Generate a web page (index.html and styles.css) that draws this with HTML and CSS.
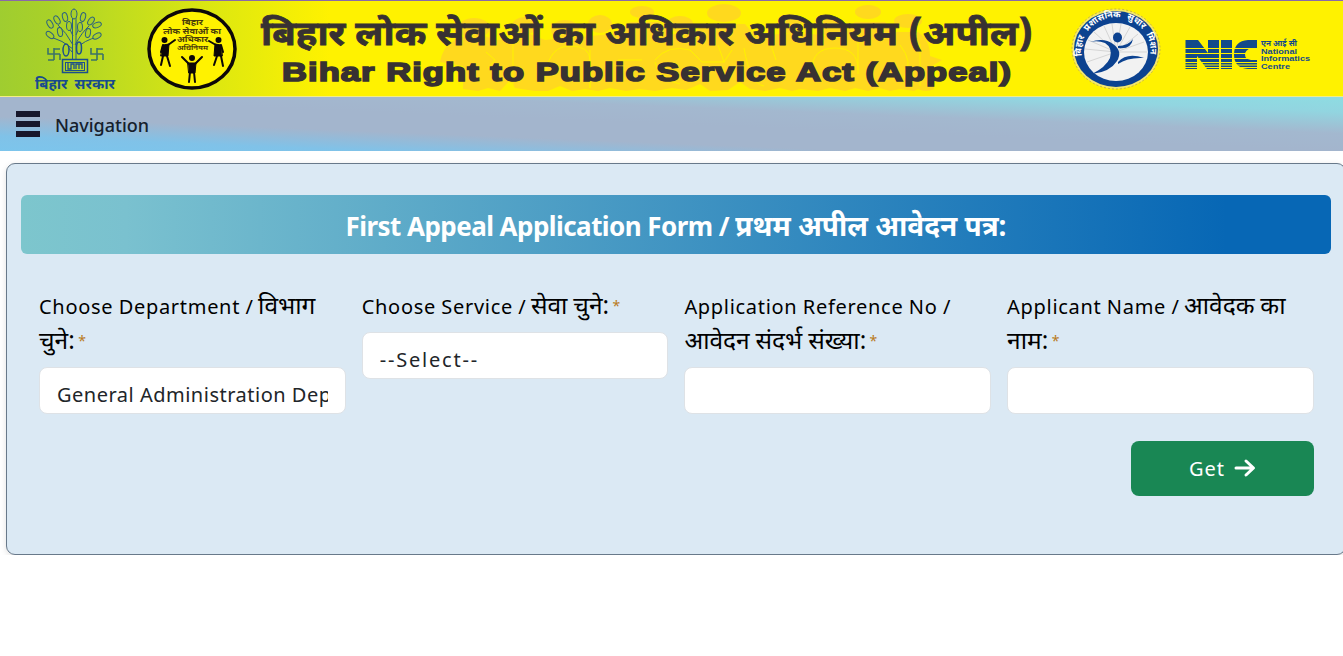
FILE: index.html
```html
<!DOCTYPE html>
<html lang="en">
<head>
    <meta charset="UTF-8">
    <meta name="viewport" content="width=device-width, initial-scale=1.0">
    <title>First Appeal</title>
    <link rel="stylesheet" href="styles.css">
</head>
<body>
    <header class="banner">
        <svg class="crowd" width="510" height="97" viewBox="440 0 510 97">
            <g fill="#ffd91e">
                <ellipse cx="474" cy="28" rx="16" ry="10"/>
                <ellipse cx="524" cy="26" rx="12" ry="9"/>
                <ellipse cx="565" cy="30" rx="14" ry="10"/>
                <ellipse cx="600" cy="24" rx="12" ry="9"/>
                <ellipse cx="642" cy="12" rx="12" ry="6"/>
                <ellipse cx="680" cy="24" rx="13" ry="8"/>
                <ellipse cx="724" cy="13" rx="17" ry="9"/>
                <ellipse cx="790" cy="24" rx="12" ry="10"/>
                <ellipse cx="830" cy="27" rx="12" ry="9"/>
                <ellipse cx="868" cy="12" rx="13" ry="7"/>
                <ellipse cx="908" cy="21" rx="14" ry="7"/>
                <path d="M455 40Q474 30 495 40H515L530 34 545 40 565 38 590 36 612 34 630 22H660L672 34H692L705 24H745L755 36 780 34H812L840 38 855 22H885L895 32H918Q930 40 930 56L942 60 932 66 934 89Q926 93 918 89L914 91 900 89 890 91 880 88 868 91 855 88 845 91 830 88 818 91 800 89 792 91 780 88 765 91 750 89 740 82 728 90 710 91 700 84 686 90 672 88 655 91 640 89 626 91 610 88 598 91 585 89 572 91 560 86 548 91 535 91 515 88 510 80 500 91 488 88 478 91 463 89 463 66 440 62Q443 46 455 40Z"/>
            </g>
            <path fill="none" stroke="#fff200" d="M486 52L495 60 488 68M513 36V86M546 72Q550 46 570 46T590 60V88M590 88V50M618 60H642M655 60Q668 44 690 50L702 62H725M655 62Q658 80 680 84M718 45L724 62 732 50M744 48Q750 84 764 86M770 42L776 60M812 70Q812 48 835 48T858 70M858 74V42M900 45Q914 62 904 78M920 44V86"/>
        </svg>

        <svg class="emblem" width="140" height="97" viewBox="0 0 140 97">
            <g fill="none" stroke="#2a6080" stroke-width="1">
                <path d="M72.500 59V16M76 59V16M73 45Q66 32 58 25M73 49Q62 40 51 37M75 45Q82 32 89 26M76 49Q84 40 98 37M73 36Q69 28 67 22M76 35Q79 28 82 22M72 52Q68 46 66 49M77 52Q81 42 79 45"/>
                <g fill="#a8d02a">
                    <ellipse cx="74" cy="14" rx="3" ry="5"/>
                    <ellipse cx="65" cy="17" rx="2.500" ry="4.500" transform="rotate(-15 65 17)"/>
                    <ellipse cx="83" cy="17" rx="2.500" ry="4.500" transform="rotate(15 83 17)"/>
                    <ellipse cx="57" cy="20" rx="2.500" ry="4.500" transform="rotate(-30 57 20)"/>
                    <ellipse cx="91" cy="21" rx="2.500" ry="4.500" transform="rotate(35 91 21)"/>
                    <ellipse cx="50" cy="24" rx="2.500" ry="4.500" transform="rotate(-30 50 24)"/>
                    <ellipse cx="97" cy="25" rx="2.500" ry="4.500" transform="rotate(70 97 25)"/>
                    <ellipse cx="50" cy="35" rx="2.500" ry="4.500" transform="rotate(-50 50 35)"/>
                    <ellipse cx="97" cy="36" rx="2.500" ry="4.500" transform="rotate(60 97 36)"/>
                    <ellipse cx="60" cy="32" rx="2.500" ry="4.500" transform="rotate(-10 60 32)"/>
                    <ellipse cx="88" cy="33" rx="2.500" ry="4.500" transform="rotate(10 88 33)"/>
                    <ellipse cx="69" cy="26" rx="2.500" ry="4.500"/>
                    <ellipse cx="80" cy="27" rx="2.500" ry="4.500"/>
                    <ellipse cx="66" cy="50" rx="3" ry="6" stroke="#1c4f8c" stroke-width="1.500"/>
                    <ellipse cx="79" cy="48" rx="2.500" ry="6" stroke="#1c4f8c" stroke-width="1.500"/>
                </g>
                <g stroke="#1c4f8c">
                    <rect x="62.500" y="59.500" width="25" height="13" stroke-width="1.500"/>
                    <rect x="65.500" y="62.500" width="19" height="8"/>
                    <path stroke-width="1.300" d="M68 63V69H71V64H74V69M76 69V64H79V69M79 64H82V69"/>
                </g>
                <path stroke="#3c7368" stroke-width="1.600" d="M48 48V54H60M54 48V60M54 49H60M48 60H54M60 54V60"/>
                <path stroke="#3c7368" stroke-width="1.600" d="M91 48V54H103M97 48V60M97 49H103M91 60H97M103 54V60"/>
            </g>
            <text class="hindi" x="35" y="89" font-size="14" word-spacing="3" textLength="80" lengthAdjust="spacingAndGlyphs" fill="#174a8f">बिहार सरकार</text>
        </svg>

        <svg class="seal" width="105" height="97" viewBox="140 0 105 97">
            <ellipse cx="192" cy="49" rx="43" ry="39" fill="#fff200" stroke="#0c0708" stroke-width="3.500"/>
            <g class="hindi" fill="#4a3d0a" font-size="8">
                <text x="182" y="25" textLength="21" lengthAdjust="spacingAndGlyphs">बिहार</text>
                <text x="163" y="33.500" textLength="58" lengthAdjust="spacingAndGlyphs">लोक सेवाओं का</text>
                <text x="177" y="42" textLength="31" lengthAdjust="spacingAndGlyphs">अधिकार</text>
                <text x="177" y="50" font-size="7" textLength="31" lengthAdjust="spacingAndGlyphs">अधिनियम</text>
            </g>
            <g fill="#0c0708" stroke="#0c0708" stroke-width="2" stroke-linecap="round">
                <circle cx="164.500" cy="40" r="2"/>
                <path d="M163 45L169 44 168 56H161Z" stroke-width="1"/>
                <path fill="none" d="M168 45L175 40M163 45L161 52M163 56L161 65M167 56L170 66"/>
                <circle cx="218.500" cy="40" r="2"/>
                <path d="M221 45L215 44 214 56H222Z" stroke-width="1"/>
                <path fill="none" d="M216 45L209 41M221 45L223 52M217 56L214 65M221 56L223 66"/>
                <circle cx="192" cy="58" r="2"/>
                <path d="M188 63H196L195 73H189Z" stroke-width="1"/>
                <path fill="none" d="M189 64L182 57M195 64L202 57M190 72L189 82M194 72L195 82"/>
            </g>
        </svg>

        <svg class="title" width="815" height="97" viewBox="245 0 815 97">
            <text class="hindi" x="261" y="45" font-size="34" textLength="772" lengthAdjust="spacingAndGlyphs">बिहार लोक सेवाओं का अधिकार अधिनियम (अपील)</text>
            <text class="english" x="282" y="80.500" font-size="26.500" textLength="730" lengthAdjust="spacingAndGlyphs">Bihar Right to Public Service Act (Appeal)</text>
        </svg>

        <svg class="mission" width="115" height="97" viewBox="1060 0 115 97">
            <ellipse cx="1116" cy="49" rx="44" ry="40" fill="#f5e76a" stroke="#b6a64c" stroke-width=".8" stroke-dasharray="2 2"/>
            <ellipse cx="1116" cy="49" rx="42" ry="38" fill="#0c4290"/>
            <ellipse cx="1116" cy="52" rx="32" ry="29" fill="#f2f2f2"/>
            <path stroke="#d5d5d5" stroke-width="1" d="M1116 52L1104 26M1116 52L1112 24M1116 52L1121 24M1116 52L1130 27M1116 52L1138 34M1116 52L1144 42M1116 52L1147 52M1116 52L1094 32M1116 52L1088 40M1116 52L1085 49M1116 52L1087 62"/>
            <path id="ring" fill="none" d="M1082 56A34.500 33 0 1 1 1150 56"/>
            <text class="hindi" font-size="9" word-spacing="3.500" fill="#fff"><textPath href="#ring">बिहार प्रशासनिक सुधार मिशन</textPath></text>
            <g fill="#0c4290">
                <ellipse cx="1117.500" cy="37.500" rx="4.500" ry="5"/>
                <path d="M1090 42Q1104 37 1113 44 1123 51 1117 61 1110 72 1092 74 1106 67 1110 58 1113 48 1105 43 1098 40 1090 42Z"/>
                <path d="M1118 46Q1128 46 1133 39 1131 50 1118 48Z"/>
                <path d="M1118 62Q1127 52 1144 58 1128 57 1118 64Z"/>
            </g>
        </svg>

        <svg class="nic" width="168" height="97" viewBox="1175 0 168 97">
            <g fill="#134a8a">
                <path d="M1185.500 40H1198L1208 53V40H1219V69H1207L1197 56V69H1185.500Z"/>
                <path d="M1221 40H1232V69H1221Z"/>
                <path d="M1257 40H1248Q1234 41 1234 54.500T1248 69H1257V60H1251Q1245 59 1245 54.500T1251 48H1257Z"/>
            </g>
            <path stroke="#fff200" stroke-width="1" d="M1185 48.500H1258M1185 53.500H1258M1185 58.500H1258M1185 62.500H1258M1185 65H1258M1185 67.500H1258"/>
            <g fill="#134a8a" font-family="Liberation Sans" font-weight="bold" font-size="8">
                <text class="hindi" x="1261" y="45.500" font-size="8.500" textLength="36" lengthAdjust="spacingAndGlyphs">एन आई सी</text>
                <text x="1261" y="54" textLength="36" lengthAdjust="spacingAndGlyphs">National</text>
                <text x="1261" y="61" textLength="49" lengthAdjust="spacingAndGlyphs">Informatics</text>
                <text x="1261" y="68.500" textLength="29" lengthAdjust="spacingAndGlyphs">Centre</text>
            </g>
        </svg>
    </header>

    <nav class="navbar">
        <div class="bars"><span></span><span></span><span></span></div>
        <span class="nav-label">Navigation</span>
    </nav>

    <main class="card">
        <h1>First Appeal Application Form / <span class="hi">प्रथम अपील आवेदन पत्र:</span></h1>
        <form class="row">
            <div class="field">
                <label>Choose Department / <span class="hi">विभाग<br>चुने:</span> <span class="star">*</span></label>
                <div class="control"><span>General Administration Department</span></div>
            </div>
            <div class="field">
                <label>Choose Service / <span class="hi">सेवा चुने:</span> <span class="star">*</span></label>
                <div class="control"><span class="placeholder">--Select--</span></div>
            </div>
            <div class="field">
                <label>Application Reference No /<br><span class="hi">आवेदन संदर्भ संख्या:</span> <span class="star">*</span></label>
                <input class="control" type="text">
            </div>
            <div class="field">
                <label>Applicant Name / <span class="hi">आवेदक का<br>नाम:</span> <span class="star">*</span></label>
                <input class="control" type="text">
            </div>
        </form>
        <div class="actions">
            <button type="button">Get
                <svg width="22" height="20" viewBox="0 0 22 20"><path d="M2 10H19M12 3L19.500 10 12 17" fill="none" stroke="#fff" stroke-width="3" stroke-linecap="round" stroke-linejoin="round"/></svg>
            </button>
        </div>
    </main>
</body>
</html>
```

FILE: styles.css
```css
* {
    box-sizing: border-box;
}

body {
    margin: 0;
    background-color: #fff;
    font-family: "Noto Sans", "Open Sans", sans-serif;
    color: #000;
    overflow: hidden;
}

.banner {
    position: relative;
    display: flex;
    height: 97px;
    border-top: 1px solid #8a6aa8;
    border-bottom: 1px solid #f3ee86;
    background: linear-gradient(to right, #9fcd30 0, #a9d128 50px, #bedb20 110px, #dfe80f 220px, #fff200 330px);
}

.banner svg {
    display: block;
    flex: none;
    margin-top: -1px;
    position: relative;
    overflow: visible;
}

.banner .crowd {
    position: absolute;
    left: 440px;
    top: 0;
}

.hindi {
    font-family: "Noto Sans Devanagari", "Noto Sans", sans-serif;
    font-weight: bold;
}

.title {
    fill: #373132;
    stroke: #373132;
    stroke-width: 0.8px;
}

.english {
    font-family: "Liberation Sans", Arial, sans-serif;
    font-weight: bold;
    letter-spacing: 0.8px;
    stroke-width: 1.6px;
}

.navbar {
    display: flex;
    align-items: center;
    gap: 15px;
    height: 54px;
    padding: 0 15px 0 16px;
    background:
        linear-gradient(to top right, #7cc5ec 0, #80c2e8 14%, rgba(163, 181, 205, 0) 32%),
        linear-gradient(to bottom left, #8edce2 0, #92d5e0 14%, #a3b8cf 34%, #a3b5cd 50%);
}

.bars {
    display: flex;
    flex-direction: column;
    gap: 4px;
    width: 24px;
}

.bars span {
    height: 6px;
    background-color: #17172b;
}

.nav-label {
    padding-top: 2px;
    font-size: 18px;
    font-weight: 500;
    color: #16202c;
}

.card {
    width: 1340px;
    height: 392px;
    margin: 12px 0 0 6px;
    padding: 31px 14px 0;
    border: 1px solid #68798a;
    border-radius: 9px;
    background-color: #dbe9f4;
    box-shadow: 0 2px 6px rgba(0, 0, 0, 0.12);
}

h1 {
    width: 1310px;
    height: 59px;
    margin: 0;
    border-radius: 6px;
    background: linear-gradient(to right, #7dc6cd 0, #7ac1cf 8%, #0767b5 92%);
    color: #fff;
    font-size: 26px;
    font-weight: bold;
    line-height: 61px;
    letter-spacing: -0.55px;
    text-align: center;
    white-space: nowrap;
}

h1 .hi {
    font-size: 28px;
}

.row {
    display: grid;
    grid-template-columns: repeat(4, 306.5px);
    column-gap: 16.2px;
    align-items: start;
    margin: 35px 0 0 18px;
}

label {
    display: block;
    height: 35px;
    margin-bottom: 8px;
    font-size: 20px;
    line-height: 35px;
    letter-spacing: 0.7px;
    word-spacing: -0.5px;
    white-space: nowrap;
}

label:has(br) {
    height: 70px;
}

.hi {
    letter-spacing: 0;
}

label .hi {
    margin-left: -1px;
    font-size: 24.500px;
    line-height: 30px;
}

label br + .hi {
    margin-left: 0;
}

.star {
    color: #b97a1a;
    margin-left: -2px;
    font-size: 14px;
    line-height: 1;
    vertical-align: 3px;
}

.control {
    display: block;
    width: 100%;
    height: 46.500px;
    padding: 0 17px;
    border: 1px solid #dee2e6;
    border-radius: 8px;
    background-color: #fff;
    color: #212529;
    font-size: 20px;
    letter-spacing: 0.5px;
    line-height: 53px;
}

.control span {
    display: block;
    overflow: hidden;
    white-space: nowrap;
    height: 44px;
}

.control .placeholder {
    letter-spacing: 1.8px;
}

.actions {
    display: flex;
    justify-content: flex-end;
    margin: 27px 17px 0 0;
}

button {
    display: flex;
    align-items: center;
    justify-content: center;
    gap: 9px;
    width: 183px;
    height: 55px;
    border: none;
    border-radius: 8px;
    background-color: #198754;
    color: #fff;
    font-family: inherit;
    font-size: 20px;
    letter-spacing: 1px;
}
```
